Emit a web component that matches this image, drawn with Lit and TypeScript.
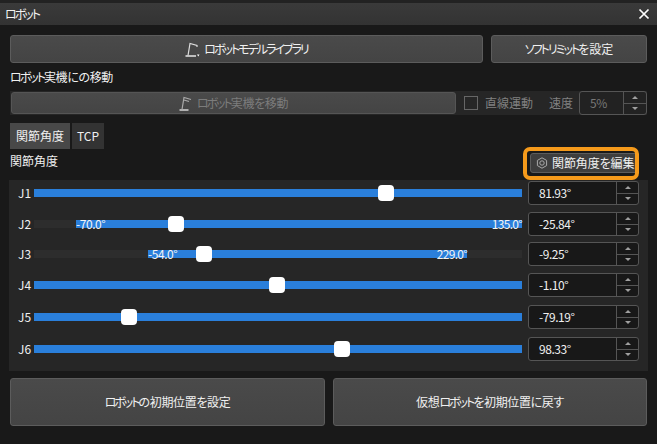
import { LitElement, html, css } from "lit";
import { customElement } from "lit/decorators.js";

const joints = [
  { n: "J1", v: "81.93°", pos: 352, lo: 0, hi: 488 },
  { n: "J2", v: "-25.84°", pos: 142, lo: 42, hi: 488, a: "-70.0°", b: "135.0°" },
  { n: "J3", v: "-9.25°", pos: 170, lo: 114, hi: 433, a: "-54.0°", b: "229.0°" },
  { n: "J4", v: "-1.10°", pos: 243, lo: 0, hi: 488 },
  { n: "J5", v: "-79.19°", pos: 95, lo: 0, hi: 488 },
  { n: "J6", v: "98.33°", pos: 308, lo: 0, hi: 488 },
];

const arrows = html`<span class="arrows"><span class="up"><i></i></span><span class="down"><i></i></span></span>`;

@customElement("app-root")
export class AppRoot extends LitElement {
  static styles = css`
    :host {
      display: flex;
      flex-direction: column;
      width: 657px;
      height: 444px;
      overflow: hidden;
      background: #191919;
      color: #f0f0f0;
      font-family: "Noto Sans CJK JP", "Noto Sans", sans-serif;
      font-size: 12px;
      font-feature-settings: "palt";
      line-height: 16px;
    }
    .k { letter-spacing: -2px; }
    .tight { letter-spacing: -0.35px; }
    .strip { height: 3px; flex: none; background: #222; }
    .title {
      height: 22px;
      flex: none;
      background: linear-gradient(#3a3a3a, #333);
      display: flex;
      align-items: center;
      justify-content: space-between;
      padding: 0 6px 0 5px;
      color: #f2f2f2;
    }
    .close { width: 14px; height: 14px; }
    .body { padding: 10px 10px 0; display: flex; flex-direction: column; }
    .btn {
      display: flex;
      align-items: center;
      justify-content: center;
      box-sizing: border-box;
      background: linear-gradient(#4a4a4a, #444);
      border: 1px solid #5c5c5c;
      border-radius: 3px;
      color: #f0f0f0;
      white-space: nowrap;
    }
    .top { display: flex; gap: 8px; height: 28px; }
    .lib { width: 473px; }
    .lib svg { margin-right: 4px; }
    .soft { width: 156px; }
    .caption { height: 28px; display: flex; align-items: center; color: #f0f0f0; }
    .move {
      display: flex;
      align-items: center;
      height: 24px;
      background: #262626;
      color: #808080;
    }
    .move .btn {
      margin-left: 1px;
      width: 445px;
      height: 22px;
      color: #7c7c7c;
      border-color: #555;
    }
    .move .btn svg { margin-right: 4px; }
    .check {
      width: 14px;
      height: 14px;
      box-sizing: border-box;
      border: 1px solid #666;
      margin: 0 7px 0 8px;
    }
    .speedlabel { margin: 0 6px 0 16px; }
    .spin {
      display: flex;
      box-sizing: border-box;
      height: 24px;
      border: 1px solid #555;
      border-radius: 3px;
      background: #181818;
      align-items: stretch;
    }
    .speed { width: 68px; color: #777; background: #222; }
    .speed .val { width: 43px; padding-left: 10px; }
    .val { box-sizing: border-box; display: flex; align-items: center; letter-spacing: -0.45px; }
    .arrows {
      border-left: 1px solid #555;
      flex: 1;
      display: flex;
      flex-direction: column;
    }
    .arrows span { flex: 1; display: flex; align-items: center; justify-content: center; }
    .arrows .up { border-bottom: 1px solid #555; }
    .arrows i { width: 0; height: 0; border: 3.5px solid transparent; }
    .arrows .up i { border-top: 0; border-bottom: 3px solid #a0a0a0; }
    .arrows .down i { border-bottom: 0; border-top: 3px solid #a0a0a0; }
    .tabs { display: flex; gap: 2px; margin-top: 8px; height: 26px; }
    .tab {
      display: flex;
      align-items: center;
      justify-content: center;
      background: #333;
      width: 32px;
    }
    .tab.on { background: #484848; width: 60px; }
    .head {
      height: 31px;
      display: flex;
      justify-content: space-between;
      margin-right: 8px;
    }
    .head .label { margin-top: 4px; }
    .focus {
      box-sizing: border-box;
      width: 116px;
      height: 33px;
      margin-top: -2px;
      border: 4px solid #f59a1b;
      border-radius: 7px;
      overflow: hidden;
      padding: 2px 0 3px 3px;
      display: flex;
    }
    .focus .btn {
      width: 130px;
      flex: none;
      justify-content: flex-start;
      padding-left: 5px;
      border-radius: 3px 0 0 3px;
      letter-spacing: -0.1px;
      background: #3e3e3e;
    }
    .focus svg { margin-right: 4px; flex: none; }
    .panel {
      margin: 0 -1px;
      background: #262626;
      padding: 1px 9px 10px;
      display: grid;
      grid-template-columns: 16px 488px 111px;
      grid-template-rows: 31px 30px 31px 32px 32px 24px;
      align-items: start;
    }
    .j { height: 24px; display: flex; align-items: center; color: #f0f0f0; }
    .trackwrap { height: 24px; display: flex; align-items: center; position: relative; }
    .track { width: 100%; height: 8px; background: #2d2d2d; position: relative; }
    .fill {
      position: absolute;
      top: 0;
      bottom: 0;
      background: #2a7fdb;
      display: flex;
      justify-content: space-between;
      align-items: center;
      color: #f4f4f4;
      line-height: 8px;
      letter-spacing: -0.45px;
    }
    .fill span:last-child { letter-spacing: -0.7px; }
    .thumb {
      position: absolute;
      top: 4px;
      width: 16px;
      height: 16px;
      margin-left: -8px;
      border-radius: 4px;
      background: #fff;
    }
    .jspin { margin-left: 6px; width: 111px; color: #f0f0f0; }
    .jspin .val { width: 87px; padding-left: 10px; }
    .bottom { display: flex; gap: 8px; margin-top: 7px; }
    .bottom .btn { height: 48px; flex: 0 0 315px; }
    .bottom .btn + .btn { flex: 0 0 314px; }
  `;

  render() {
    return html`
      <div class="strip"></div>
      <div class="title">
        <span><span class="k">ロボット</span></span>
        <svg class="close" viewBox="0 0 14 14"><path d="M2.5 2.5l9 9M11.5 2.5l-9 9" stroke="#fff" stroke-width="1.7" fill="none" /></svg>
      </div>
      <div class="body">
        <div class="top">
          <div class="btn lib">
            <svg width="15" height="15" viewBox="0 0 15 15" fill="none" stroke="#ddd" stroke-width="1.2">
              <path d="M0.5 14h10.5" stroke-width="1.6" />
              <path d="M3 13.5L5 1.5l7 2v1.5" />
              <path d="M12 12.5l2.5 0-1.2 2z" fill="#fff" stroke="none" />
            </svg>
            <span class="k">ロボットモデルライブラリ</span>
          </div>
          <div class="btn soft"><span class="k">ソフトリミット</span>を設定</div>
        </div>
        <div class="caption"><span class="tight"><span class="k">ロボット</span>実機にの移動</span></div>
        <div class="move">
          <div class="btn">
            <svg width="14" height="16" viewBox="0 0 14 16" fill="none" stroke="#aaa" stroke-width="1.2">
              <path d="M0.5 15h9" stroke="#ccc" stroke-width="1.6" />
              <path d="M3 14.5L5 2.5l7 2M5 5l5 1.5" />
            </svg>
            <span class="tight"><span class="k">ロボット</span>実機を移動</span>
          </div>
          <span class="check"></span>
          <span>直線運動</span>
          <span class="speedlabel">速度</span>
          <div class="spin speed"><span class="val">5%</span>${arrows}</div>
        </div>
        <div class="tabs">
          <div class="tab on">関節角度</div>
          <div class="tab">TCP</div>
        </div>
        <div class="head">
          <span class="label">関節角度</span>
          <div class="focus">
            <div class="btn">
              <svg width="12" height="12" viewBox="0 0 12 12" fill="none" stroke="#aaa" stroke-width="1">
                <path d="M6 .8l4.6 2.6v5.2L6 11.2 1.4 8.6V3.4z" />
                <circle cx="6" cy="6" r="2.2" />
              </svg>
              <span>関節角度を編集</span>
            </div>
          </div>
        </div>
        <div class="panel">
          ${joints.map(
            (j) => html`
              <span class="j">${j.n}</span>
              <div class="trackwrap">
                <div class="track">
                  <div class="fill" style="left:${j.lo}px;width:${j.hi - j.lo}px">
                    <span>${j.a ?? ""}</span><span>${j.b ?? ""}</span>
                  </div>
                </div>
                <div class="thumb" style="left:${j.pos}px"></div>
              </div>
              <div class="spin jspin"><span class="val">${j.v}</span>${arrows}</div>
            `
          )}
        </div>
        <div class="bottom">
          <div class="btn"><span class="tight"><span class="k">ロボット</span>の初期位置を設定</span></div>
          <div class="btn"><span class="tight">仮想<span class="k">ロボット</span>を初期位置に戻す</span></div>
        </div>
      </div>
    `;
  }
}
